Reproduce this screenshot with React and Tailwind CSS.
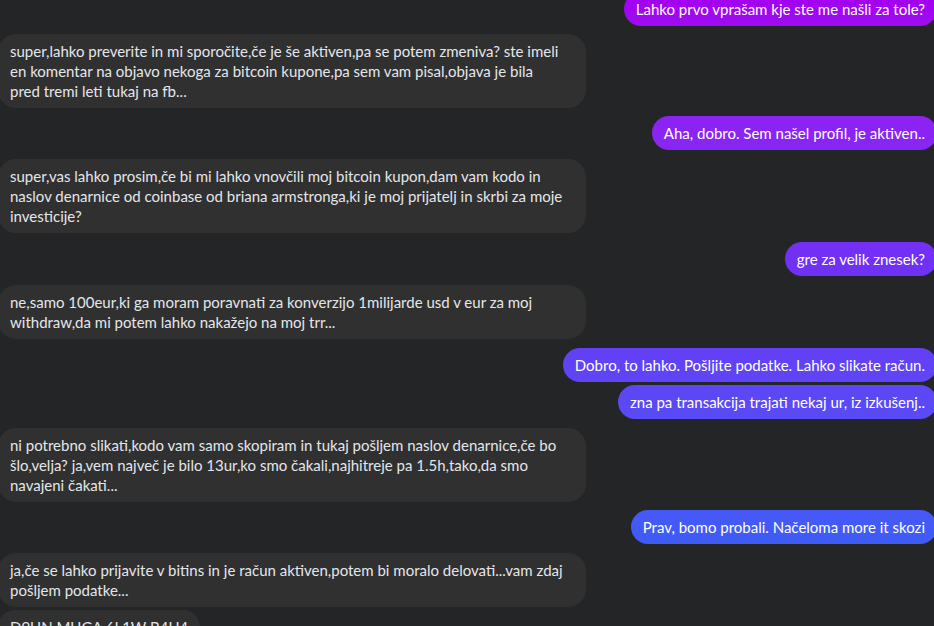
const messages = [
  { from: 'me', lines: ['Lahko prvo vprašam kje ste me našli za tole?'] },
  {
    from: 'them',
    gap: 'mt-[8px]',
    lines: [
      'super,lahko preverite in mi sporočite,če je še aktiven,pa se potem zmeniva? ste imeli',
      'en komentar na objavo nekoga za bitcoin kupone,pa sem vam pisal,objava je bila',
      'pred tremi leti tukaj na fb...',
    ],
  },
  { from: 'me', gap: 'mt-[8px]', lines: ['Aha, dobro. Sem našel profil, je aktiven..'] },
  {
    from: 'them',
    lines: [
      'super,vas lahko prosim,če bi mi lahko vnovčili moj bitcoin kupon,dam vam kodo in',
      'naslov denarnice od coinbase od briana armstronga,ki je moj prijatelj in skrbi za moje',
      'investicije?',
    ],
  },
  { from: 'me', lines: ['gre za velik znesek?'] },
  {
    from: 'them',
    lines: [
      'ne,samo 100eur,ki ga moram poravnati za konverzijo 1milijarde usd v eur za moj',
      'withdraw,da mi potem lahko nakažejo na moj trr...',
    ],
  },
  { from: 'me', lines: ['Dobro, to lahko. Pošljite podatke. Lahko slikate račun.'] },
  { from: 'me', lines: ['zna pa transakcija trajati nekaj ur, iz izkušenj..'], gap: 'mt-[3px]' },
  {
    from: 'them',
    lines: [
      'ni potrebno slikati,kodo vam samo skopiram in tukaj pošljem naslov denarnice,če bo',
      'šlo,velja? ja,vem največ je bilo 13ur,ko smo čakali,najhitreje pa 1.5h,tako,da smo',
      'navajeni čakati...',
    ],
  },
  { from: 'me', gap: 'mt-[8px]', lines: ['Prav, bomo probali. Načeloma more it skozi'] },
  {
    from: 'them',
    lines: [
      'ja,če se lahko prijavite v bitins in je račun aktiven,potem bi moralo delovati...vam zdaj',
      'pošljem podatke...',
    ],
  },
  { from: 'them', lines: ['D9UN MUGA 6L1W B4U4'], gap: 'mt-[3px]', short: true },
];

function Bubble({ msg, first }) {
  const mine = msg.from === 'me';
  const spacing = first ? '' : msg.gap || 'mt-[9px]';

  if (mine) {
    return (
      <div className={`flex justify-end -mr-[3px] ${spacing}`}>
        <div className="rounded-[18px] bg-linear-to-b from-[#a300f0] via-[#6c32f5] via-45% to-[#1f66f5] bg-fixed px-3 py-[7px] text-white whitespace-nowrap">
          {msg.lines[0]}
        </div>
      </div>
    );
  }

  return (
    <div className={`flex justify-start -ml-[2px] ${spacing}`}>
      <div
        className={`rounded-[18px] bg-[#303030] px-3 py-[7px] text-[#e4e6eb] whitespace-nowrap ${
          msg.short ? '' : 'w-[588px]'
        }`}
      >
        {msg.lines.map((line, i) => (
          <div key={i}>{line}</div>
        ))}
      </div>
    </div>
  );
}

export default function App() {
  return (
    <div className="h-[626px] w-[934px] overflow-hidden bg-[#242526] font-['Segoe_UI',Lato,sans-serif] text-[15px] leading-5">
      <div className="-mt-[8px] flex flex-col">
        {messages.map((msg, i) => (
          <Bubble key={i} msg={msg} first={i === 0} />
        ))}
      </div>
    </div>
  );
}
